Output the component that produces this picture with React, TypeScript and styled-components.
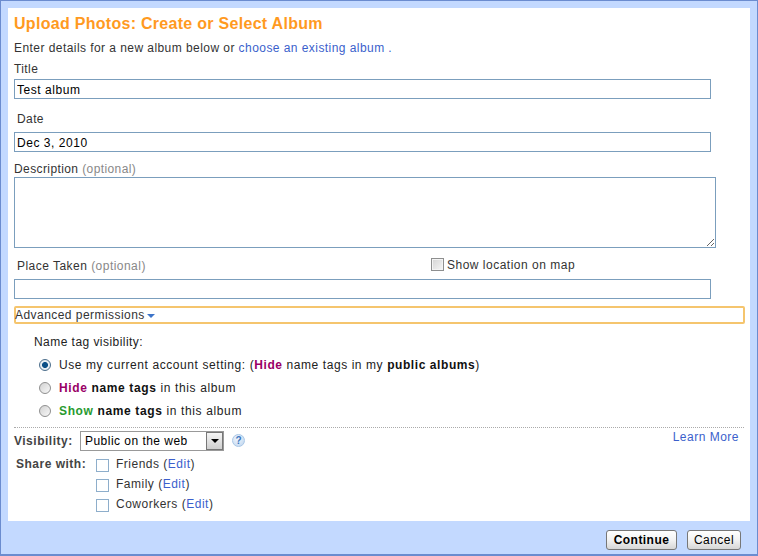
import React from "react";
import styled, { createGlobalStyle } from "styled-components";

const Global = createGlobalStyle`
  html, body { margin: 0; padding: 0; }
  body { font-family: "Liberation Sans", Arial, sans-serif; font-size: 12px; color: #333; }
`;

const Frame = styled.div`
  box-sizing: border-box;
  width: 758px;
  height: 556px;
  background: #c3d9ff;
  border: 1px solid #6b8ccf;
  border-bottom-width: 2px;
  padding: 7px 7px 0;
  display: flex;
  flex-direction: column;
`;

const Panel = styled.div`
  box-sizing: border-box;
  height: 513px;
  background: #fff;
  padding: 6px 6px 0;
  display: flex;
  flex-direction: column;
`;

const Heading = styled.h1`
  margin: 0;
  font-size: 16px;
  line-height: 20px;
  font-weight: bold;
  color: #ff9a1f;
  letter-spacing: 0.29px;
`;

const Intro = styled.div`
  margin-top: 7px;
  line-height: 14px;
  letter-spacing: 0.44px;
`;

const Link = styled.a`
  color: #3b5fcc;
  text-decoration: none;
`;

const FieldLabel = styled.div<{ $indent?: number; $top: number }>`
  margin-top: ${(p) => p.$top}px;
  padding-left: ${(p) => p.$indent || 0}px;
  line-height: 14px;
  letter-spacing: 0.4px;
`;

const Optional = styled.span`
  color: #888;
`;

const TextInput = styled.input<{ $top?: number }>`
  display: block;
  box-sizing: border-box;
  width: 697px;
  height: 20px;
  margin: ${(p) => p.$top ?? 3}px 0 0;
  padding: 2px 2px 0;
  border: 1px solid #7b9ebd;
  font-family: "Liberation Sans", Arial, sans-serif;
  font-size: 12px;
  letter-spacing: 0.55px;
  color: #000;
  outline: none;
`;

const Description = styled.textarea`
  display: block;
  box-sizing: border-box;
  width: 702px;
  height: 71px;
  margin: 1px 0 0;
  padding: 2px;
  border: 1px solid #7b9ebd;
  outline: none;
`;

const PlaceRow = styled.div`
  display: flex;
  align-items: center;
  margin-top: 11px;
  height: 14px;
`;

const PlaceLabel = styled.div`
  width: 417px;
  padding-left: 3px;
  box-sizing: border-box;
  letter-spacing: 0.47px;
`;

const MapToggle = styled.label`
  display: flex;
  align-items: center;
  gap: 3px;
  letter-spacing: 0.5px;
  margin-top: -3px;
`;

const MapBox = styled.span`
  box-sizing: border-box;
  width: 13px;
  height: 13px;
  border: 1px solid #8e8f8f;
  background: linear-gradient(135deg, #d4d4d4, #f6f6f6);
  box-shadow: inset 0 0 0 1px #f4f4f4;
`;

const Advanced = styled.div`
  box-sizing: border-box;
  width: 731px;
  height: 18px;
  margin-top: 7px;
  border: 2px solid #f5c56e;
  border-radius: 2px;
  line-height: 14px;
  letter-spacing: 0.45px;
  display: flex;
  align-items: center;
  gap: 2px;
  text-indent: -1px;
`;

const Caret = styled.span`
  width: 0;
  height: 0;
  margin-top: 2px;
  border-left: 4px solid transparent;
  border-right: 4px solid transparent;
  border-top: 4px solid #3d74c9;
`;

const TagSection = styled.div`
  padding-left: 20px;
  margin-top: 11px;
  color: #222;
`;

const TagTitle = styled.div`
  line-height: 14px;
  letter-spacing: 0.45px;
`;

const RadioRow = styled.label`
  display: flex;
  align-items: center;
  height: 23px;
  padding-left: 5px;
  gap: 8px;
  letter-spacing: 0.63px;
  &:first-of-type {
    margin-top: 4px;
    letter-spacing: 0.58px;
  }
`;

const RadioDot = styled.span<{ $on?: boolean }>`
  box-sizing: border-box;
  width: 12px;
  height: 12px;
  border-radius: 50%;
  border: 1px solid ${(p) => (p.$on ? "#4c6e8c" : "#8f8f8f")};
  background: ${(p) =>
    p.$on
      ? "radial-gradient(circle, #0b4f86 0 2.6px, #e8eef2 3.4px)"
      : "linear-gradient(135deg, #d2d2d2, #f8f8f8)"};
`;

const Tone = styled.b<{ $tone: "hide" | "show" }>`
  color: ${(p) => (p.$tone === "hide" ? "#990066" : "#279a2f")};
`;

const Strong = styled.b`
  color: #111;
`;

const Divider = styled.div`
  width: 730px;
  margin-top: 5px;
  border-top: 1px dotted #aaa;
`;

const VisibilityRow = styled.div`
  display: flex;
  align-items: center;
  margin-top: 3px;
  height: 20px;
`;

const RowLabel = styled.b<{ $width: number; $indent?: number }>`
  box-sizing: border-box;
  width: ${(p) => p.$width}px;
  padding-left: ${(p) => p.$indent || 0}px;
  color: #444;
  letter-spacing: 0.5px;
  line-height: 20px;
`;

const SelectBox = styled.div`
  box-sizing: border-box;
  width: 144px;
  height: 20px;
  border: 1px solid #999;
  display: flex;
  align-items: center;
  justify-content: space-between;
  padding-left: 4px;
  color: #000;
  letter-spacing: 0.47px;
`;

const SelectArrow = styled.span`
  box-sizing: border-box;
  width: 17px;
  height: 18px;
  border: 1px solid #777;
  background: linear-gradient(#f4f4f4, #cfcfcf);
  display: flex;
  align-items: center;
  justify-content: center;
  &::after {
    content: "";
    border-left: 4px solid transparent;
    border-right: 4px solid transparent;
    border-top: 4px solid #000;
  }
`;

const Help = styled.span`
  box-sizing: border-box;
  width: 13px;
  height: 13px;
  margin-left: 8px;
  margin-top: -2px;
  border-radius: 50%;
  background: radial-gradient(circle at 40% 35%, #f0f6fd, #bcd4ee);
  border: 1px solid #a9c6e6;
  color: #3a76c0;
  font-size: 10px;
  font-weight: bold;
  line-height: 11px;
  text-align: center;
`;

const LearnMore = styled(Link)`
  margin-left: auto;
  margin-right: 5px;
  margin-top: -8px;
  letter-spacing: 0.5px;
`;

const ShareGrid = styled.div`
  display: grid;
  grid-template-columns: 82px 1fr;
  margin-top: 3px;
`;

const ShareList = styled.div`
  display: flex;
  flex-direction: column;
`;

const ShareRow = styled.label`
  display: flex;
  align-items: center;
  gap: 7px;
  height: 20px;
  letter-spacing: 0.5px;
`;

const ShareBox = styled.span`
  box-sizing: border-box;
  width: 13px;
  height: 13px;
  margin-top: 2px;
  border: 1px solid #8eaecb;
`;

const Footer = styled.div`
  display: flex;
  justify-content: flex-end;
  gap: 10px;
  margin-top: 9px;
  padding-right: 9px;
`;

const Button = styled.button<{ $primary?: boolean }>`
  box-sizing: border-box;
  height: 20px;
  width: ${(p) => (p.$primary ? 71 : 54)}px;
  padding: 0;
  border: 1px solid #777;
  border-radius: 3px;
  background: linear-gradient(#ffffff, #f2f2f2 50%, #d6d6d6);
  font-family: "Liberation Sans", Arial, sans-serif;
  font-size: 12px;
  letter-spacing: 0.45px;
  font-weight: ${(p) => (p.$primary ? "bold" : "normal")};
  color: #000;
`;

const shareGroups = ["Friends", "Family", "Coworkers"];

export default function App() {
  return (
    <>
      <Global />
      <Frame>
        <Panel>
          <Heading>Upload Photos: Create or Select Album</Heading>
          <Intro>
            Enter details for a new album below or <Link>choose an existing album .</Link>
          </Intro>
          <FieldLabel $top={7}>Title</FieldLabel>
          <TextInput defaultValue="Test album" />
          <FieldLabel $top={13} $indent={3}>Date</FieldLabel>
          <TextInput defaultValue="Dec 3, 2010" $top={6} />
          <FieldLabel $top={10}>
            Description <Optional>(optional)</Optional>
          </FieldLabel>
          <Description />
          <PlaceRow>
            <PlaceLabel>
              Place Taken <Optional>(optional)</Optional>
            </PlaceLabel>
            <MapToggle>
              <MapBox />
              Show location on map
            </MapToggle>
          </PlaceRow>
          <TextInput defaultValue="" $top={6} />
          <Advanced>
            Advanced permissions
            <Caret />
          </Advanced>
          <TagSection>
            <TagTitle>Name tag visibility:</TagTitle>
            <RadioRow>
              <RadioDot $on />
              <span>
                Use my current account setting: (<Tone $tone="hide">Hide</Tone> name tags in my{" "}
                <Strong>public albums</Strong>)
              </span>
            </RadioRow>
            <RadioRow>
              <RadioDot />
              <span>
                <Tone $tone="hide">Hide</Tone> <Strong>name tags</Strong> in this album
              </span>
            </RadioRow>
            <RadioRow>
              <RadioDot />
              <span>
                <Tone $tone="show">Show</Tone> <Strong>name tags</Strong> in this album
              </span>
            </RadioRow>
          </TagSection>
          <Divider />
          <VisibilityRow>
            <RowLabel $width={66}>Visibility:</RowLabel>
            <SelectBox>
              Public on the web
              <SelectArrow />
            </SelectBox>
            <Help>?</Help>
            <LearnMore>Learn More</LearnMore>
          </VisibilityRow>
          <ShareGrid>
            <RowLabel $width={82} $indent={2}>Share with:</RowLabel>
            <ShareList>
              {shareGroups.map((name) => (
                <ShareRow key={name}>
                  <ShareBox />
                  <span>
                    {name} (<Link>Edit</Link>)
                  </span>
                </ShareRow>
              ))}
            </ShareList>
          </ShareGrid>
        </Panel>
        <Footer>
          <Button $primary>Continue</Button>
          <Button>Cancel</Button>
        </Footer>
      </Frame>
    </>
  );
}
